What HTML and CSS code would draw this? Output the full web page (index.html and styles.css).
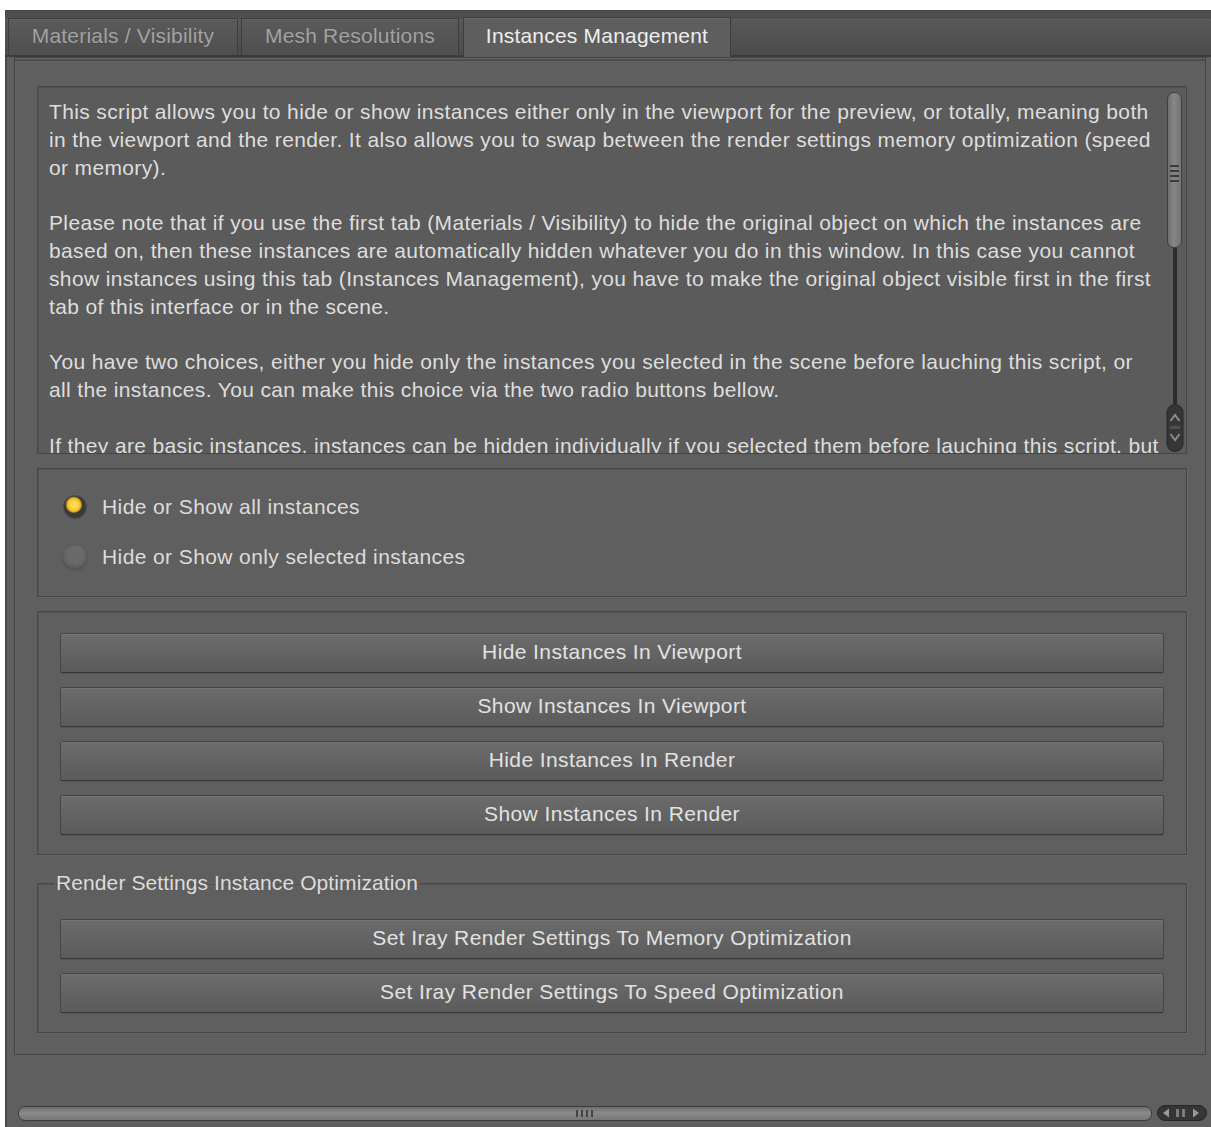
FILE: index.html
```html
<!DOCTYPE html>
<html lang="en">
<head>
<meta charset="utf-8">
<title>Instances Management</title>
<link rel="stylesheet" href="styles.css">
</head>
<body>
<div class="window">
  <div class="tabbar">
    <div class="tab tab-materials">Materials / Visibility</div>
    <div class="tab tab-mesh">Mesh Resolutions</div>
    <div class="tab tab-instances is-active">Instances Management</div>
  </div>

  <div class="panel">
    <div class="notes">
      <div class="notes-text">
        <p>This script allows you to hide or show instances either only in the viewport for the preview, or totally, meaning both<br>in the viewport and the render. It also allows you to swap between the render settings memory optimization (speed<br>or memory).</p>
        <p>Please note that if you use the first tab (Materials / Visibility) to hide the original object on which the instances are<br>based on, then these instances are automatically hidden whatever you do in this window. In this case you cannot<br>show instances using this tab (Instances Management), you have to make the original object visible first in the first<br>tab of this interface or in the scene.</p>
        <p>You have two choices, either you hide only the instances you selected in the scene before lauching this script, or<br>all the instances. You can make this choice via the two radio buttons bellow.</p>
        <p>If they are basic instances, instances can be hidden individually if you selected them before lauching this script, but</p>
      </div>
      <div class="vscroll">
        <div class="vthumb"><span class="grip"></span></div>
        <div class="vtrack"></div>
        <svg class="varrows" width="18" height="48" viewBox="0 0 18 48">
          <rect x="1" y="0.5" width="16" height="47" rx="8" fill="#363636" stroke="#262626"/>
          <path d="M4.5 17 L9 11 L13.5 17" fill="none" stroke="#8c8c8c" stroke-width="2"/>
          <rect x="4" y="22" width="10" height="3" fill="#505050"/>
          <path d="M4.5 30 L9 36 L13.5 30" fill="none" stroke="#8c8c8c" stroke-width="2"/>
        </svg>
      </div>
    </div>

    <div class="box choices">
      <label class="choice">
        <span class="radio is-on"></span>
        <span class="choice-text">Hide or Show all instances</span>
      </label>
      <label class="choice">
        <span class="radio"></span>
        <span class="choice-text">Hide or Show only selected instances</span>
      </label>
    </div>

    <div class="box actions">
      <button class="btn">Hide Instances In Viewport</button>
      <button class="btn">Show Instances In Viewport</button>
      <button class="btn">Hide Instances In Render</button>
      <button class="btn">Show Instances In Render</button>
    </div>

    <fieldset class="group">
      <legend>Render Settings Instance Optimization</legend>
      <button class="btn">Set Iray Render Settings To Memory Optimization</button>
      <button class="btn">Set Iray Render Settings To Speed Optimization</button>
    </fieldset>
  </div>

  <div class="footer"></div>

  <div class="hscroll">
    <div class="hthumb"><span class="hgrip"></span></div>
    <svg class="harrows" width="50" height="16" viewBox="0 0 50 16">
      <rect x="0.5" y="0.5" width="49" height="15" rx="7.5" fill="#363636" stroke="#262626"/>
      <path d="M12 3.5 L6 8 L12 12.5 Z" fill="#9a9a9a"/>
      <rect x="19" y="4" width="3" height="8" fill="#7c7c7c"/>
      <rect x="25" y="4" width="3" height="8" fill="#7c7c7c"/>
      <path d="M36 3.5 L42 8 L36 12.5 Z" fill="#9a9a9a"/>
    </svg>
  </div>
</div>
</body>
</html>
```

FILE: styles.css
```css
* {
  box-sizing: border-box;
}

html,
body {
  margin: 0;
  background: #ffffff;
}

body {
  font-family: "Liberation Sans", Arial, sans-serif;
  font-size: 21px;
  letter-spacing: 0.4px;
  color: #dedede;
}

/* ---------- window frame ---------- */
.window {
  margin: 10px 0 0 5px;
  width: 1206px;
  height: 1117px;
  display: flex;
  flex-direction: column;
  background: #5f5f5f;
  box-shadow: inset 2px 0 0 #4a4a4a;
}

/* ---------- tab strip ---------- */
.tabbar {
  flex: none;
  height: 47px;
  display: flex;
  align-items: flex-end;
  padding-left: 3px;
  background: linear-gradient(#474747 0 1px, #4e4e4e 1px 9px, #5e5e5e 9px 10px, #585858 10px, #4b4b4b 45px, #3c3c3c 45px 47px);
}

.tab {
  height: 39px;
  display: flex;
  align-items: center;
  justify-content: center;
  color: #a2a2a2;
  text-shadow: 0 1px 0 #4a4a4a;
  background: linear-gradient(#626262 0 1px, #5a5a5a 1px, #4f4f4f);
  border: 1px solid #3e3e3e;
  border-bottom: 2px solid #3a3a3a;
  letter-spacing: 0.2px;
  padding-bottom: 2px;
}

.tab-materials {
  width: 230px;
}

.tab-mesh {
  width: 218px;
  margin-left: 3px;
}

.tab-instances {
  width: 268px;
  margin-left: 4px;
}

.tab.is-active {
  height: 40px;
  color: #eeeeee;
  text-shadow: none;
  background: linear-gradient(#686868 0 1px, #5e5e5e 1px);
  border-bottom: none;
  padding-bottom: 4px;
}

/* ---------- main panel ---------- */
.panel {
  flex: none;
  height: 998px;
  margin-left: 9px;
  width: 1192px;
  border: 1px solid #444444;
  box-shadow: inset 0 1px 0 #666666, inset 0 3px 0 #4d4d4d, inset 1px 0 0 #656565;
  padding: 28px 18px 0 22px;
  display: flex;
  flex-direction: column;
}

/* description box with its own scrollbar */
.notes {
  flex: none;
  height: 368px;
  display: flex;
  background: #5b5b5b;
  border: 1px solid #474747;
  box-shadow: inset 1px 1px 0 #525252;
  padding-right: 3px;
  overflow: hidden;
}

.notes-text {
  flex: 1;
  padding: 11px 0 0 11px;
  line-height: 27.8px;
  letter-spacing: 0.36px;
  white-space: nowrap;
  overflow: hidden;
}

.notes-text p {
  margin: 0 0 27.8px;
}

.vscroll {
  flex: none;
  width: 17px;
  padding: 5px 0 1px;
  display: flex;
  flex-direction: column;
  align-items: center;
}

.vthumb {
  flex: none;
  width: 15px;
  height: 156px;
  border-radius: 7px;
  border: 1px solid #3f3f3f;
  background: linear-gradient(90deg, #6f6f6f, #868686 45%, #757575);
  display: flex;
  align-items: center;
  justify-content: center;
}

.grip {
  width: 9px;
  height: 18px;
  background: repeating-linear-gradient(#3c3c3c 0 2px, transparent 2px 5px);
  margin-top: 8px;
}

.vtrack {
  flex: 1;
  width: 4px;
  background: #2d2d2d;
}

.varrows {
  flex: none;
  display: block;
}

/* ---------- framed groups ---------- */
.box {
  flex: none;
  margin-top: 14px;
  border: 1px solid #474747;
  box-shadow: inset 1px 1px 0 #555555, 1px 1px 0 #666666;
}

.choices {
  height: 129px;
  padding: 13px 0 0 25px;
  display: flex;
  flex-direction: column;
}

.choice {
  height: 50px;
  display: flex;
  align-items: center;
  gap: 15px;
  color: #dcdcdc;
}

.radio {
  width: 24px;
  height: 24px;
  border-radius: 50%;
  background: radial-gradient(circle at 50% 40%, #6a6a6a 0 40%, #606060 70%, #575757);
  box-shadow: 0 1px 2px #4c4c4c, inset 0 -1px 1px #555555;
}

.radio.is-on {
  width: 22px;
  height: 22px;
  margin: 0 1px;
  background: radial-gradient(circle at 45% 40%, #ffd94c 0 3px, #f2c22b 6px, #e2aa18 7px, #3a3a3a 8.5px);
  box-shadow: 0 0 0 1px #4c4c4c;
}

.actions {
  height: 244px;
  padding: 21px 22px 0;
  display: flex;
  flex-direction: column;
  gap: 14px;
}

.group {
  flex: none;
  margin: 16px 0 0;
  min-width: 0;
  height: 162px;
  padding: 24px 22px 0;
  border: 1px solid #474747;
  box-shadow: inset 1px 1px 0 #555555, 1px 1px 0 #666666;
  display: flex;
  flex-direction: column;
  gap: 14px;
}

.group legend {
  margin-left: -6px;
  padding: 0 2px;
  line-height: 24px;
  color: #dcdcdc;
  letter-spacing: 0.1px;
}

/* ---------- push buttons ---------- */
.btn {
  flex: none;
  height: 40px;
  width: 100%;
  font: inherit;
  letter-spacing: inherit;
  color: #e2e2e2;
  border: 1px solid #454545;
  border-bottom-color: #383838;
  border-radius: 2px;
  background: linear-gradient(#767676 0 1px, #6b6b6b 1px, #5b5b5b);
  box-shadow: 0 1px 0 #555555;
  padding: 0 0 2px;
  cursor: default;
}

/* ---------- bottom area ---------- */
.footer {
  flex: none;
  height: 50px;
}

.hscroll {
  flex: none;
  height: 16px;
  display: flex;
  align-items: center;
  padding: 0 4px 0 13px;
  gap: 5px;
}

.hthumb {
  flex: 1;
  height: 15px;
  border-radius: 7px;
  border: 1px solid #3b3b3b;
  background: linear-gradient(#6d6d6d, #8a8a8a 45%, #767676);
  display: flex;
  align-items: center;
  justify-content: center;
}

.hgrip {
  width: 18px;
  height: 7px;
  background: repeating-linear-gradient(90deg, #444444 0 2px, transparent 2px 5px);
}

.harrows {
  flex: none;
  display: block;
}
```
